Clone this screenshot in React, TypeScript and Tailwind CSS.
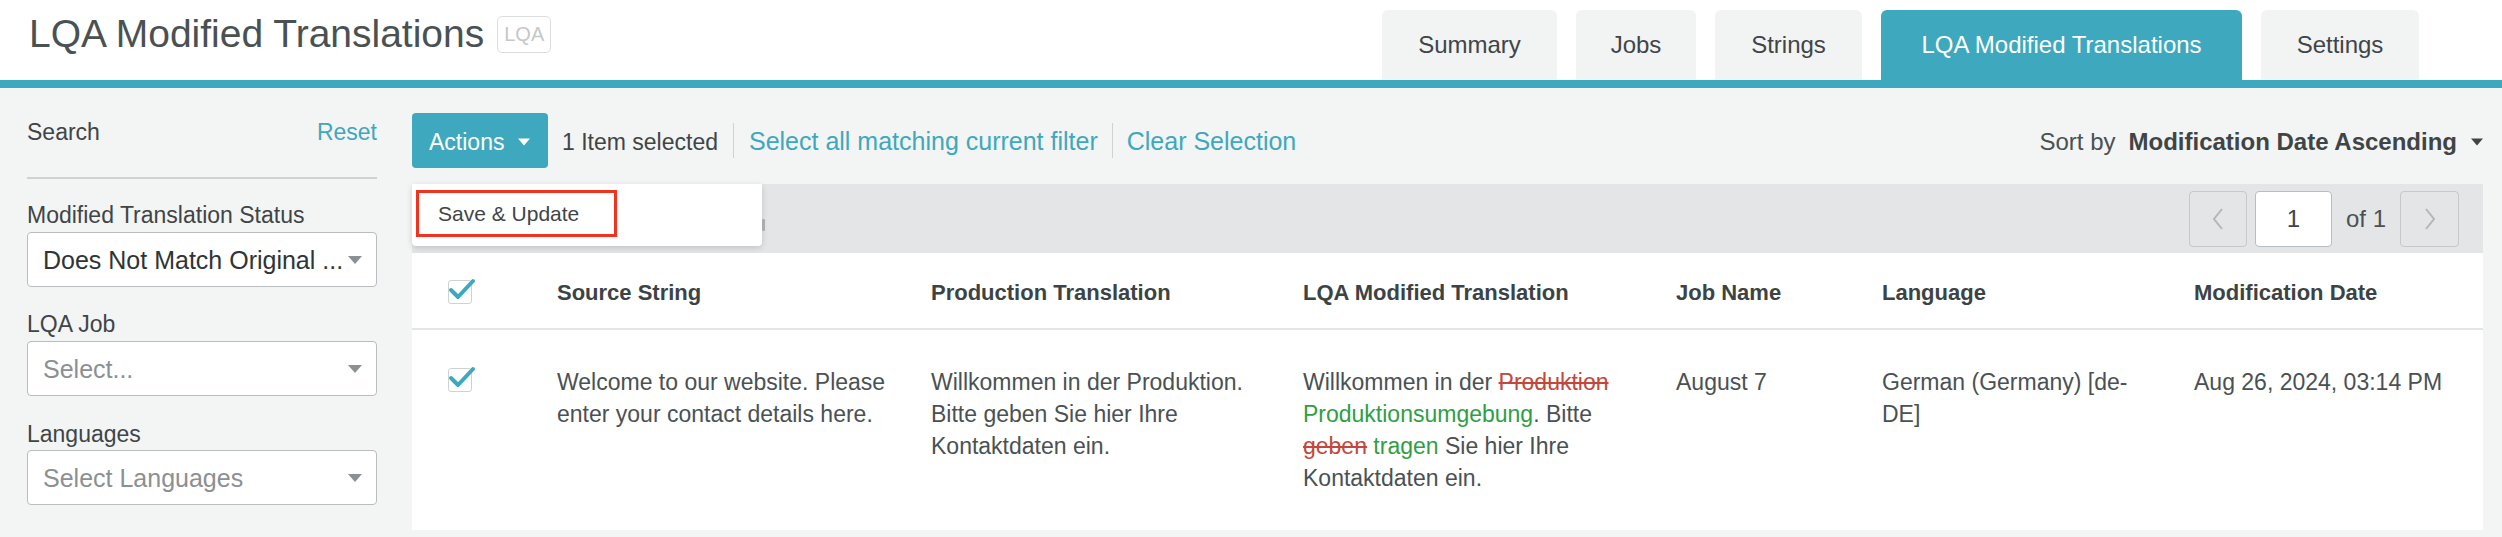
import React from "react";

const TABS = [
  { label: "Summary", w: "w-[175px]" },
  { label: "Jobs", w: "w-[120px]" },
  { label: "Strings", w: "w-[147px]" },
  { label: "LQA Modified Translations", w: "w-[361px]", active: true },
  { label: "Settings", w: "w-[158px]" },
];

function Caret({ className }: { className?: string }) {
  return (
    <svg width="14" height="8" viewBox="0 0 14 8" className={className}>
      <path d="M0 0h14L7 8z" fill="currentColor" />
    </svg>
  );
}

function Check() {
  return (
    <div className="relative w-[24px] h-[24px] rounded-[3px] border border-[#cfd2d3] bg-white">
      <svg width="28" height="24" viewBox="0 0 28 24" className="absolute -top-[1px] -left-[1px] overflow-visible">
        <path d="M3 10 L10 17 L25 1" fill="none" stroke="#3ea8be" strokeWidth="4" strokeLinecap="round" strokeLinejoin="round" />
      </svg>
    </div>
  );
}

function Select({ value, placeholder }: { value?: string; placeholder?: string }) {
  return (
    <div className="h-[55px] rounded-[4px] border border-[#b9bdbf] bg-white flex items-center justify-between pl-[15px] pr-[14px]">
      {value ? (
        <span className="text-[25px] text-[#2f3436]">{value}</span>
      ) : (
        <span className="text-[25px] text-[#8b9093]">{placeholder}</span>
      )}
      <Caret className="text-[#8b9093]" />
    </div>
  );
}

const Del = ({ children }: { children: React.ReactNode }) => (
  <span className="text-[#c3473b] line-through">{children}</span>
);
const Ins = ({ children }: { children: React.ReactNode }) => (
  <span className="text-[#2f9e44]">{children}</span>
);

export default function App() {
  return (
    <div className="w-[2502px] h-[537px] overflow-hidden bg-[#f3f4f4] font-['Liberation_Sans',Arial,sans-serif] text-[#4a5153]">
      {/* Header */}
      <header className="h-[80px] bg-white flex items-start justify-between">
        <div className="flex items-center pl-[29px] pt-[11px] gap-[13px]">
          <h1 className="text-[39px] leading-[46px] text-[#4a5153]">LQA Modified Translations</h1>
          <span className="border border-[#dcdede] rounded-[5px] px-[6px] text-[20px] leading-[35px] text-[#c5c8c9]">LQA</span>
        </div>
        <nav className="flex gap-[19px] self-end pr-[83px]">
          {TABS.map((t) => (
            <div
              key={t.label}
              className={`${t.w} h-[70px] rounded-t-[6px] flex items-center justify-center text-[24px] ${
                t.active ? "bg-[#3ea8be] text-white" : "bg-[#f2f3f3] text-[#3f4547]"
              }`}
            >
              {t.label}
            </div>
          ))}
        </nav>
      </header>
      <div className="h-[8px] bg-[#3ea8be]" />

      <div className="flex">
        {/* Sidebar */}
        <aside className="w-[412px] shrink-0 pl-[27px] pr-[35px] text-[23px] leading-[28px] text-[#3f4547]">
          <div className="mt-[30px] flex justify-between">
            <span>Search</span>
            <span className="text-[#3ea8be]">Reset</span>
          </div>
          <div className="mt-[31px] h-[2px] bg-[#cfd2d3]" />
          <div className="mt-[22px]">Modified Translation Status</div>
          <div className="mt-[3px]">
            <Select value="Does Not Match Original ..." />
          </div>
          <div className="mt-[23px]">LQA Job</div>
          <div className="mt-[3px]">
            <Select placeholder="Select..." />
          </div>
          <div className="mt-[24px]">Languages</div>
          <div className="mt-[2px]">
            <Select placeholder="Select Languages" />
          </div>
        </aside>

        {/* Main */}
        <main className="flex-1 pr-[19px]">
          <div className="mt-[25px] h-[55px] flex items-center justify-between">
            <div className="flex items-center text-[23px]">
              <div className="h-[55px] w-[136px] rounded-[4px] bg-[#3ea8be] text-white flex items-center pl-[17px] pt-[3px] gap-[14px]">
                <span>Actions</span>
                <Caret className="w-[12px] text-white" />
              </div>
              <span className="ml-[14px] pt-[3px] text-[#3f4547]">1 Item selected</span>
              <span className="mx-[15px] w-px h-[35px] bg-[#cfd2d3]" />
              <span className="pt-[3px] text-[25px] text-[#3ea8be]">Select all matching current filter</span>
              <span className="mx-[14px] w-px h-[35px] bg-[#cfd2d3]" />
              <span className="pt-[3px] text-[25px] text-[#3ea8be]">Clear Selection</span>
            </div>
            <div className="flex items-center pt-[3px] text-[24px]">
              <span className="text-[#4a5153]">Sort by</span>
              <span className="ml-[13px] font-bold text-[#3f4547]">Modification Date Ascending</span>
              <Caret className="ml-[14px] w-[12px] text-[#3f4547]" />
            </div>
          </div>

          {/* Toolbar */}
          <div className="relative mt-[16px] h-[69px] bg-[#e3e5e6] flex items-center justify-end pr-[24px]">
            <div className="flex items-center gap-[8px] text-[24px]">
              <div className="w-[58px] h-[56px] rounded-[4px] border border-[#c6c9cb] flex items-center justify-center">
                <svg width="12" height="22" viewBox="0 0 12 22" fill="none" stroke="#b3b7b9" strokeWidth="2">
                  <path d="M10 1 L2 11 L10 21" />
                </svg>
              </div>
              <div className="w-[77px] h-[56px] rounded-[4px] border border-[#b9bdbf] bg-white flex items-center justify-center text-[#3f4547]">
                1
              </div>
              <span className="mx-[6px] text-[#4a5153]">of 1</span>
              <div className="w-[59px] h-[56px] rounded-[4px] border border-[#c6c9cb] flex items-center justify-center">
                <svg width="12" height="22" viewBox="0 0 12 22" fill="none" stroke="#b3b7b9" strokeWidth="2">
                  <path d="M2 1 L10 11 L2 21" />
                </svg>
              </div>
            </div>

            {/* Actions dropdown */}
            <div className="absolute left-0 top-0 w-[350px] h-[62px] bg-white rounded-b-[4px] shadow-[0_2px_6px_rgba(0,0,0,0.15)] pl-[4px] pt-[6px]">
              <div className="w-[201px] h-[47px] border-[3px] border-[#f0321f] flex items-center pl-[19px] text-[21px] text-[#3f4547]">
                Save &amp; Update
              </div>
              <div className="absolute left-[350px] top-[35px] w-[3px] h-[12px] rounded-[1px] bg-[#a9adb0]" />
            </div>
          </div>

          {/* Table */}
          <div className="bg-white">
            <div className="grid grid-cols-[145px_374px_372px_373px_206px_312px_1fr] h-[77px] pt-[4px] items-center border-b-2 border-[#e3e5e6] text-[22px] font-bold text-[#3c4345]">
              <div className="pl-[36px] -mt-[2px]">
                <Check />
              </div>
              <div>Source String</div>
              <div>Production Translation</div>
              <div>LQA Modified Translation</div>
              <div>Job Name</div>
              <div>Language</div>
              <div>Modification Date</div>
            </div>
            <div className="grid grid-cols-[145px_374px_372px_373px_206px_312px_1fr] h-[200px] pt-[36px] text-[23px] leading-[32px] text-[#4a5153]">
              <div className="pl-[36px] pt-[2px]">
                <Check />
              </div>
              <div className="pr-[40px]">Welcome to our website. Please enter your contact details here.</div>
              <div className="pr-[40px]">Willkommen in der Produktion. Bitte geben Sie hier Ihre Kontaktdaten ein.</div>
              <div className="pr-[40px]">
                Willkommen in der <Del>Produktion</Del> <Ins>Produktionsumgebung</Ins>. Bitte <Del>geben</Del>{" "}
                <Ins>tragen</Ins> Sie hier Ihre Kontaktdaten ein.
              </div>
              <div className="pr-[30px]">August 7</div>
              <div className="pr-[40px]">German (Germany) [de-DE]</div>
              <div>Aug 26, 2024, 03:14 PM</div>
            </div>
          </div>
        </main>
      </div>
    </div>
  );
}
